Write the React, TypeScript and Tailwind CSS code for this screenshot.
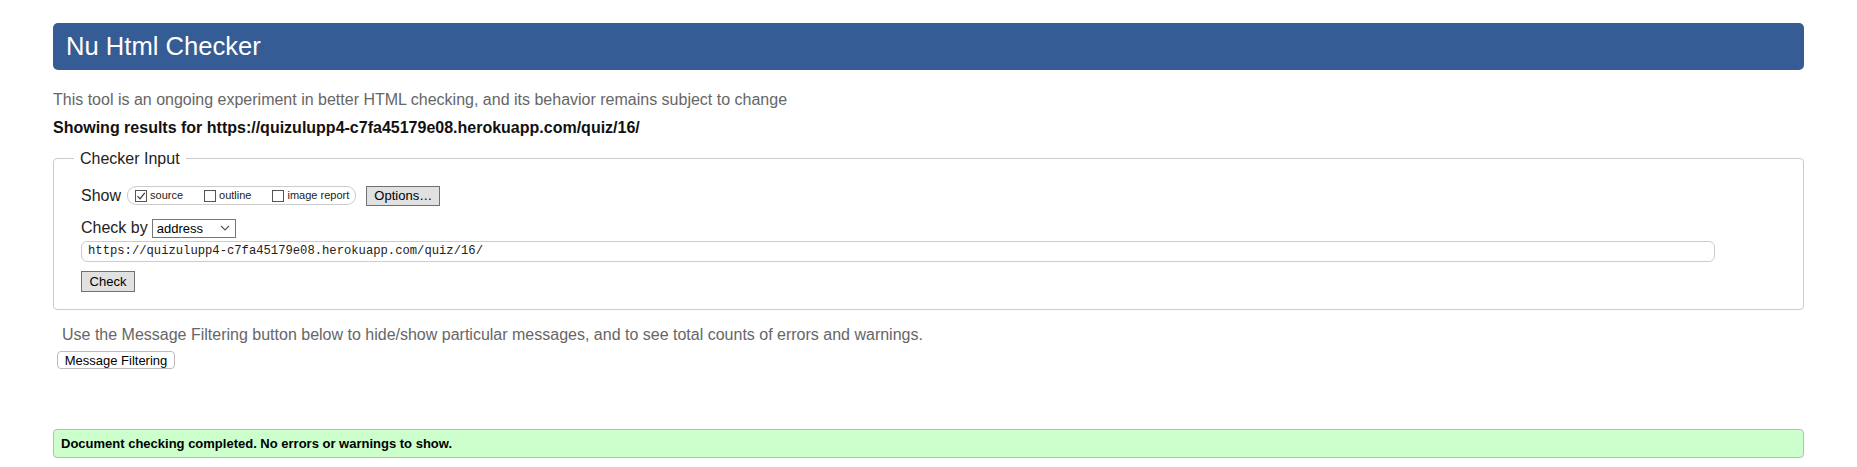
import React from "react";

function Box({ checked }: { checked?: boolean }) {
  return (
    <span className="flex h-[12px] w-[12px] items-center justify-center border border-[#555] bg-white">
      {checked ? (
        <svg width="10" height="10" viewBox="0 0 10 10">
          <path d="M1.5 5.2 L4 7.8 L8.8 1.8" fill="none" stroke="#333" strokeWidth="1.2" />
        </svg>
      ) : null}
    </span>
  );
}

export default function App() {
  return (
    <div className="min-h-[467px] bg-white px-[53px] pt-[23px] font-['Liberation_Sans',Arial,sans-serif] text-[#222]">
      <div className="flex h-[47px] items-center rounded-[5px] bg-[#365c95] pl-[13px] text-[25.6px] leading-none text-white">
        Nu Html Checker
      </div>
      <p className="mt-[20.5px] text-[16px] leading-[18px] text-[#666]">
        This tool is an ongoing experiment in better HTML checking, and its behavior remains subject to change
      </p>
      <p className="mt-[10.5px] text-[16px] font-bold leading-[18px] text-[#111]">
        Showing results for https://quizulupp4-c7fa45179e08.herokuapp.com/quiz/16/
      </p>
      <fieldset className="mt-[12.5px] rounded-[4px] border border-[#ccc] px-[20px] pb-[16px]">
        <legend className="px-[6px] text-[16px] leading-[18px] text-[#222]">Checker Input</legend>
        <div className="pl-[7px]">
          <div className="mt-[18px] flex h-[20px] items-center">
            <span className="text-[16px] leading-[18px]">Show</span>
            <div className="ml-[6px] flex h-[19px] items-center rounded-[9px] border border-[#ccc] pl-[7px] pr-[6px]">
              <label className="mr-[21px] flex items-center">
                <Box checked />
                <span className="ml-[3px] text-[11px] leading-none">source</span>
              </label>
              <label className="mr-[21px] flex items-center">
                <Box />
                <span className="ml-[3px] text-[11px] leading-none">outline</span>
              </label>
              <label className="flex items-center">
                <Box />
                <span className="ml-[3px] text-[11px] leading-none">image report</span>
              </label>
            </div>
            <button className="ml-[10px] h-[20px] w-[74px] border border-[#707070] bg-[#e1e1e1] text-[13px] leading-none text-black">
              Options…
            </button>
          </div>
          <div className="mt-[13px] flex h-[19px] items-center">
            <span className="text-[16px] leading-[18px]">Check by</span>
            <div className="ml-[4px] flex h-[19px] w-[84px] items-center justify-between border border-[#767676] pl-[4px] pr-[5px] text-[13px] leading-none text-black">
              <span>address</span>
              <svg width="10" height="6" viewBox="0 0 10 6">
                <path d="M1 1 L5 5 L9 1" fill="none" stroke="#555" strokeWidth="1.1" />
              </svg>
            </div>
          </div>
          <div className="mt-[3px] flex h-[21px] w-[1634px] items-center rounded-[6px] border border-[#ccc] pl-[6px] font-['Liberation_Mono',monospace] text-[12.2px] leading-none text-[#222]">
            https://quizulupp4-c7fa45179e08.herokuapp.com/quiz/16/
          </div>
          <div className="mt-[7px]">
            <button className="h-[21px] w-[54px] border border-[#707070] bg-[#e1e1e1] text-[13px] leading-none text-black">
              Check
            </button>
          </div>
        </div>
      </fieldset>
      <p className="mt-[16.5px] pl-[9px] text-[16px] leading-[18px] text-[#666]">
        Use the Message Filtering button below to hide/show particular messages, and to see total counts of errors and warnings.
      </p>
      <div className="mt-[3.5px] pl-[4px]">
        <button className="h-[18px] w-[118px] rounded-[4px] border border-[#bbb] bg-white text-[13px] leading-none text-black">
          Message Filtering
        </button>
      </div>
      <div className="mt-[57px] flex h-[29px] items-center rounded-[4px] border border-[#bbb] bg-[#ccffcc] pl-[7px] text-[13px] font-bold leading-none text-black">
        Document checking completed. No errors or warnings to show.
      </div>
    </div>
  );
}
